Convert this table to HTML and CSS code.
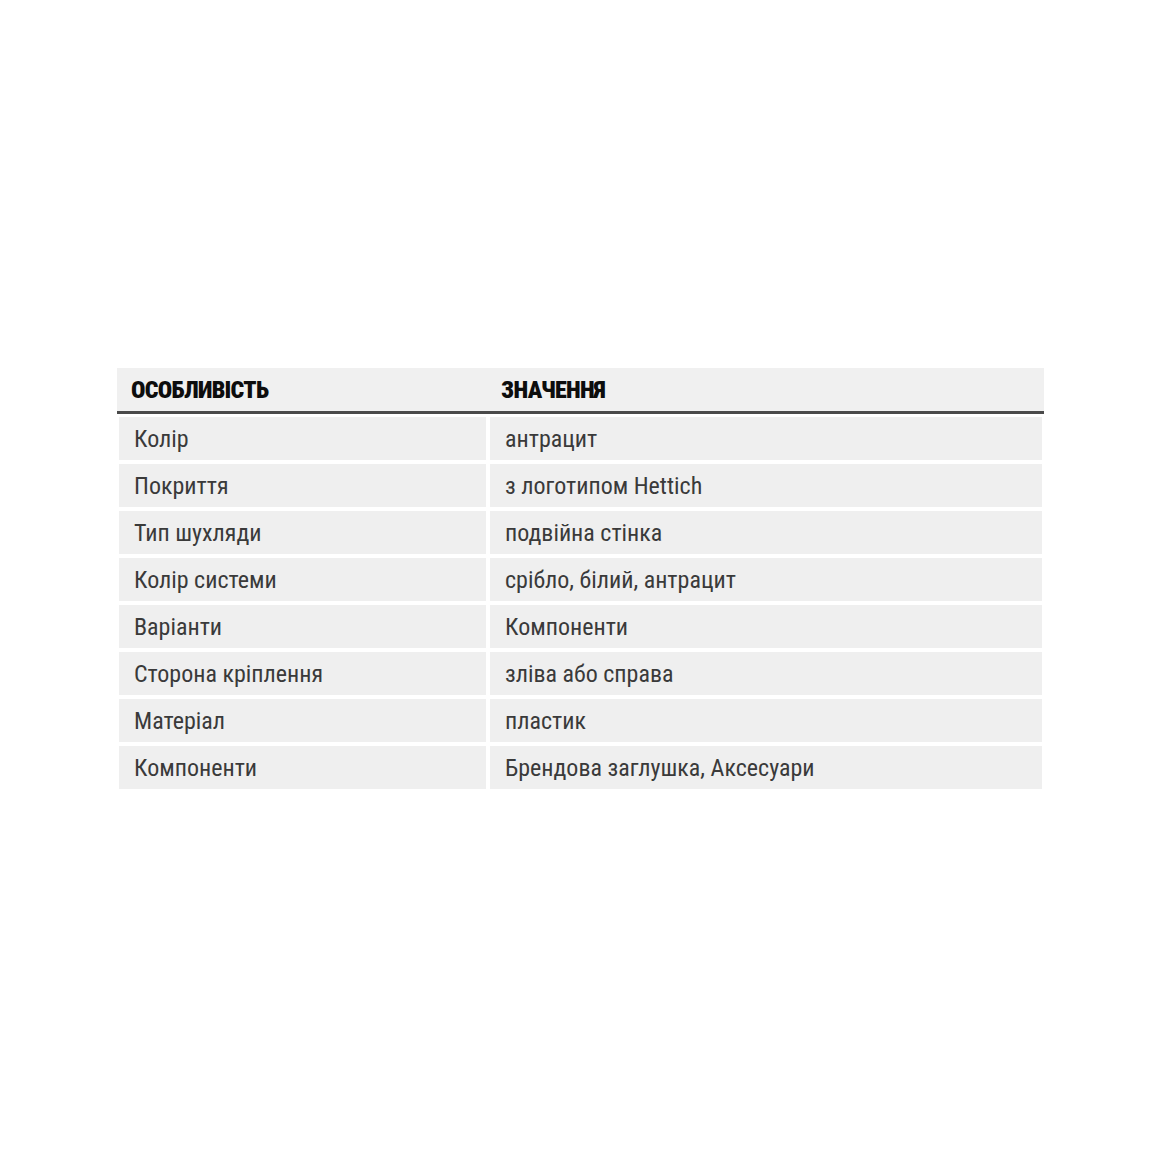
FILE: index.html
```html
<!DOCTYPE html>
<html lang="uk">
<head>
<meta charset="utf-8">
<link rel="stylesheet" href="styles.css">
</head>
<body>
<div class="page">
  <div class="spec">
    <div class="head">
      <div class="hcell">ОСОБЛИВІСТЬ</div>
      <div class="hcell">ЗНАЧЕННЯ</div>
    </div>
    <div class="rows">
      <div class="row"><div class="cell">Колір</div><div class="cell">антрацит</div></div>
      <div class="row"><div class="cell">Покриття</div><div class="cell">з логотипом Hettich</div></div>
      <div class="row"><div class="cell">Тип шухляди</div><div class="cell">подвійна стінка</div></div>
      <div class="row"><div class="cell">Колір системи</div><div class="cell">срібло, білий, антрацит</div></div>
      <div class="row"><div class="cell">Варіанти</div><div class="cell">Компоненти</div></div>
      <div class="row"><div class="cell">Сторона кріплення</div><div class="cell">зліва або справа</div></div>
      <div class="row"><div class="cell">Матеріал</div><div class="cell">пластик</div></div>
      <div class="row"><div class="cell">Компоненти</div><div class="cell">Брендова заглушка, Аксесуари</div></div>
    </div>
  </div>
</div>
</body>
</html>
```
FILE: styles.css
```css
html, body {
  margin: 0;
  padding: 0;
  background: #ffffff;
}
body {
  font-family: "Roboto", "Open Sans", sans-serif;
  font-stretch: 75%;
}
.page {
  width: 1156px;
  height: 1156px;
  padding-top: 368px;
  box-sizing: border-box;
}
.spec {
  margin-left: 117px;
  width: 927px;
}
.head {
  display: grid;
  grid-template-columns: 370px 1fr;
  height: 43px;
  background: #f0f0f0;
  border-bottom: 3px solid #4a4a4a;
  align-items: center;
}
.hcell {
  padding-left: 14px;
  font-weight: 900;
  font-size: 24px;
  letter-spacing: -0.7px;
  color: #0d0d0d;
}
.rows {
  display: flex;
  flex-direction: column;
  gap: 4px;
  padding-top: 3px;
  width: 923px;
  margin-left: 2px;
}
.row {
  display: grid;
  grid-template-columns: 367px 1fr;
  column-gap: 4px;
  height: 43px;
}
.cell {
  background: #efefef;
  display: flex;
  align-items: center;
  padding-left: 15px;
  font-size: 24px;
  color: #3a3a3a;
}
```
